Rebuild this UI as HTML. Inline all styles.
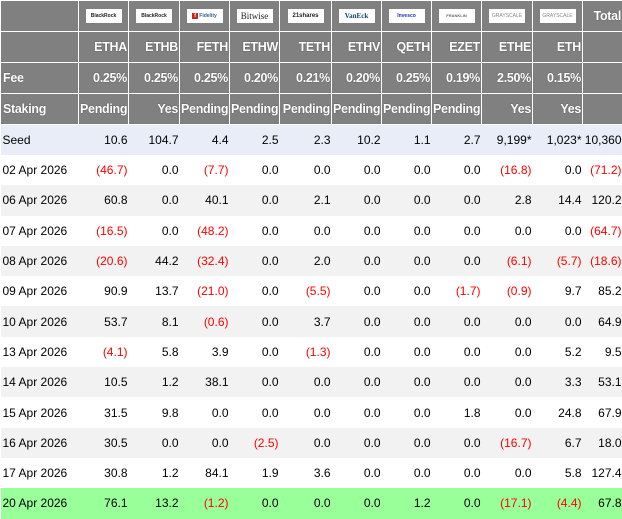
<!DOCTYPE html>
<html><head><style>
body{margin:0;width:622px;height:517px;overflow:hidden;background:#fff;font-family:"Liberation Sans",Arial,sans-serif;}
table{border-collapse:collapse;table-layout:fixed;width:622px;}
td{padding:0 1px 0 1px;text-align:right;font-size:12px;white-space:nowrap;overflow:hidden;color:#000}
tr.h td{background:#808080;color:#fff;font-weight:bold;font-size:12.5px;letter-spacing:-0.3px;border:1px solid #fff;text-shadow:0 0 1px #333;}
tr.h td:first-child{text-align:left;padding-left:2px}
tr.h1 td{height:30px}
tr.h2 td{height:30px}
tr.d td{height:30.3px}
tr.d td:first-child{text-align:left;padding-left:2px}
tr.s td{background:#e9edf7;height:30px}
tr.g td{background:#f2f2f2}
tr.gr td{background:#99ff99}
.r{color:#f00 !important}
.logo{display:inline-block;width:36px;height:14px;background:#fff;font-size:5px;line-height:14px;text-align:center;color:#222;font-weight:bold;text-shadow:none;vertical-align:middle;letter-spacing:0;overflow:hidden}
tr.h1 td{text-align:center}
tr.h1 td:last-child{text-align:right}
</style></head><body>
<table>
<colgroup><col style="width:78px"><col style="width:50px"><col style="width:51px"><col style="width:50px"><col style="width:50px"><col style="width:52px"><col style="width:50px"><col style="width:50px"><col style="width:50px"><col style="width:51px"><col style="width:50px"><col style="width:40px"></colgroup>
<tr class="h h1"><td></td><td><span class="logo">BlackRock</span></td><td><span class="logo">BlackRock</span></td><td><span class="logo" style="color:#368"><span style="background:#c22;color:#fff;padding:0 2px">f</span> Fidelity</span></td><td><span class="logo" style="font-family:'Liberation Serif',serif;font-size:9px;font-weight:normal">Bitwise</span></td><td><span class="logo" style="font-size:6px">21shares</span></td><td><span class="logo" style="color:#146;font-family:'Liberation Serif',serif;font-size:7px">VanEck</span></td><td><span class="logo" style="color:#23a">Invesco</span></td><td><span class="logo" style="font-size:4px;color:#666">FRANKLIN</span></td><td><span class="logo" style="color:#888;font-weight:normal;font-size:5px">GRAYSCALE</span></td><td><span class="logo" style="color:#888;font-weight:normal;font-size:5px">GRAYSCALE</span></td><td>Total</td></tr>
<tr class="h h2"><td></td><td>ETHA</td><td>ETHB</td><td>FETH</td><td>ETHW</td><td>TETH</td><td>ETHV</td><td>QETH</td><td>EZET</td><td>ETHE</td><td>ETH</td><td></td></tr>
<tr class="h h2"><td>Fee</td><td>0.25%</td><td>0.25%</td><td>0.25%</td><td>0.20%</td><td>0.21%</td><td>0.20%</td><td>0.25%</td><td>0.19%</td><td>2.50%</td><td>0.15%</td><td></td></tr>
<tr class="h h2"><td>Staking</td><td>Pending</td><td>Yes</td><td>Pending</td><td>Pending</td><td>Pending</td><td>Pending</td><td>Pending</td><td>Pending</td><td>Yes</td><td>Yes</td><td></td></tr>
<tr class="d s"><td>Seed</td><td>10.6</td><td>104.7</td><td>4.4</td><td>2.5</td><td>2.3</td><td>10.2</td><td>1.1</td><td>2.7</td><td>9,199*</td><td>1,023*</td><td>10,360</td></tr>
<tr class="d"><td>02 Apr 2026</td><td class="r">(46.7)</td><td>0.0</td><td class="r">(7.7)</td><td>0.0</td><td>0.0</td><td>0.0</td><td>0.0</td><td>0.0</td><td class="r">(16.8)</td><td>0.0</td><td class="r">(71.2)</td></tr>
<tr class="d g"><td>06 Apr 2026</td><td>60.8</td><td>0.0</td><td>40.1</td><td>0.0</td><td>2.1</td><td>0.0</td><td>0.0</td><td>0.0</td><td>2.8</td><td>14.4</td><td>120.2</td></tr>
<tr class="d"><td>07 Apr 2026</td><td class="r">(16.5)</td><td>0.0</td><td class="r">(48.2)</td><td>0.0</td><td>0.0</td><td>0.0</td><td>0.0</td><td>0.0</td><td>0.0</td><td>0.0</td><td class="r">(64.7)</td></tr>
<tr class="d g"><td>08 Apr 2026</td><td class="r">(20.6)</td><td>44.2</td><td class="r">(32.4)</td><td>0.0</td><td>2.0</td><td>0.0</td><td>0.0</td><td>0.0</td><td class="r">(6.1)</td><td class="r">(5.7)</td><td class="r">(18.6)</td></tr>
<tr class="d"><td>09 Apr 2026</td><td>90.9</td><td>13.7</td><td class="r">(21.0)</td><td>0.0</td><td class="r">(5.5)</td><td>0.0</td><td>0.0</td><td class="r">(1.7)</td><td class="r">(0.9)</td><td>9.7</td><td>85.2</td></tr>
<tr class="d g"><td>10 Apr 2026</td><td>53.7</td><td>8.1</td><td class="r">(0.6)</td><td>0.0</td><td>3.7</td><td>0.0</td><td>0.0</td><td>0.0</td><td>0.0</td><td>0.0</td><td>64.9</td></tr>
<tr class="d"><td>13 Apr 2026</td><td class="r">(4.1)</td><td>5.8</td><td>3.9</td><td>0.0</td><td class="r">(1.3)</td><td>0.0</td><td>0.0</td><td>0.0</td><td>0.0</td><td>5.2</td><td>9.5</td></tr>
<tr class="d g"><td>14 Apr 2026</td><td>10.5</td><td>1.2</td><td>38.1</td><td>0.0</td><td>0.0</td><td>0.0</td><td>0.0</td><td>0.0</td><td>0.0</td><td>3.3</td><td>53.1</td></tr>
<tr class="d"><td>15 Apr 2026</td><td>31.5</td><td>9.8</td><td>0.0</td><td>0.0</td><td>0.0</td><td>0.0</td><td>0.0</td><td>1.8</td><td>0.0</td><td>24.8</td><td>67.9</td></tr>
<tr class="d g"><td>16 Apr 2026</td><td>30.5</td><td>0.0</td><td>0.0</td><td class="r">(2.5)</td><td>0.0</td><td>0.0</td><td>0.0</td><td>0.0</td><td class="r">(16.7)</td><td>6.7</td><td>18.0</td></tr>
<tr class="d"><td>17 Apr 2026</td><td>30.8</td><td>1.2</td><td>84.1</td><td>1.9</td><td>3.6</td><td>0.0</td><td>0.0</td><td>0.0</td><td>0.0</td><td>5.8</td><td>127.4</td></tr>
<tr class="d gr"><td>20 Apr 2026</td><td>76.1</td><td>13.2</td><td class="r">(1.2)</td><td>0.0</td><td>0.0</td><td>0.0</td><td>1.2</td><td>0.0</td><td class="r">(17.1)</td><td class="r">(4.4)</td><td>67.8</td></tr>
</table>
</body></html>
